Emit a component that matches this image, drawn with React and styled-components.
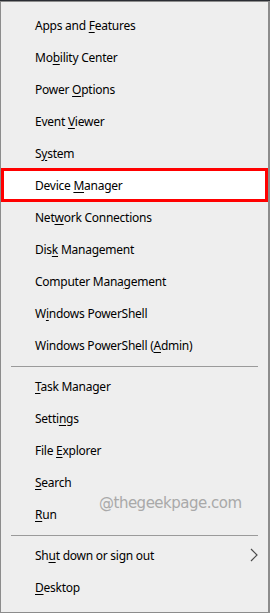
import React from "react";
import styled, { createGlobalStyle } from "styled-components";

// STYLE
const Global = createGlobalStyle`
  html, body {
    margin: 0;
    padding: 0;
    background: #2a2d33;
  }
  body {
    font-family: "Noto Sans", "Open Sans", sans-serif;
  }
`;

const Page = styled.div`
  width: 270px;
  height: 613px;
  padding-top: 1px;
  box-sizing: border-box;
  background: #2a2d33;
`;

const Menu = styled.div`
  position: relative;
  height: 612px;
  box-sizing: border-box;
  background: #eeeeee;
  border-top: 1px solid #8c8c8c;
  border-left: 1px solid #8c8c8c;
  border-right: 2px solid #8c8c8c;
  border-bottom: 1px solid #8c8c8c;
  padding: 7px 0 9px;
  display: flex;
  flex-direction: column;
`;

const Item = styled.div`
  height: ${(p) => (p.$picked ? "34px" : "32px")};
  margin: ${(p) => (p.$picked ? "-1px 0" : "0")};
  box-sizing: border-box;
  display: flex;
  align-items: center;
  justify-content: space-between;
  padding: 0 10px 0 ${(p) => (p.$picked ? "31px" : "34px")};
  border: ${(p) => (p.$picked ? "3px solid #ff0000" : "none")};
  background: ${(p) => (p.$picked ? "#ffffff" : "transparent")};
  font-size: 12px;
  letter-spacing: -0.25px;
  color: #000;
  white-space: nowrap;
`;

const Key = styled.span`
  text-decoration: underline;
  text-underline-offset: 2px;
`;

const Separator = styled.div`
  height: 1px;
  margin: 5px 10px 3px;
  background: #9a9a9a;
`;

const Mark = styled.div`
  position: absolute;
  left: 98px;
  top: 492px;
  font-family: "DejaVu Sans", sans-serif;
  font-size: 15px;
  letter-spacing: -0.5px;
  color: #a9a9a9;
`;

const Chevron = () => (
  <svg width="8" height="14" viewBox="0 0 8 14">
    <path d="M1 1 L7 7 L1 13" fill="none" stroke="#4a4a4a" strokeWidth="1.2" />
  </svg>
);

const Label = ({ text, k }) => {
  const i = text.indexOf(k);
  return (
    <span>
      {text.slice(0, i)}
      <Key>{k}</Key>
      {text.slice(i + k.length)}
    </span>
  );
};

const groupA = [
  ["Apps and Features", "F"],
  ["Mobility Center", "b"],
  ["Power Options", "O"],
  ["Event Viewer", "V"],
  ["System", "y"],
  ["Device Manager", "M", true],
  ["Network Connections", "w"],
  ["Disk Management", "k"],
  ["Computer Management", "g"],
  ["Windows PowerShell", "i"],
  ["Windows PowerShell (Admin)", "A"],
];

const groupB = [
  ["Task Manager", "T"],
  ["Settings", "n"],
  ["File Explorer", "E"],
  ["Search", "S"],
  ["Run", "R"],
];

const App = () => {
  return (
    <>
      <Global />
      <Page>
        <Menu>
          {groupA.map(([t, k, picked]) => (
            <Item key={t} $picked={picked}>
              <Label text={t} k={k} />
            </Item>
          ))}
          <Separator />
          {groupB.map(([t, k]) => (
            <Item key={t}>
              <Label text={t} k={k} />
            </Item>
          ))}
          <Separator />
          <Item>
            <Label text="Shut down or sign out" k="u" />
            <Chevron />
          </Item>
          <Item>
            <Label text="Desktop" k="D" />
          </Item>
          <Mark>@thegeekpage.com</Mark>
        </Menu>
      </Page>
    </>
  );
};

export default App;
